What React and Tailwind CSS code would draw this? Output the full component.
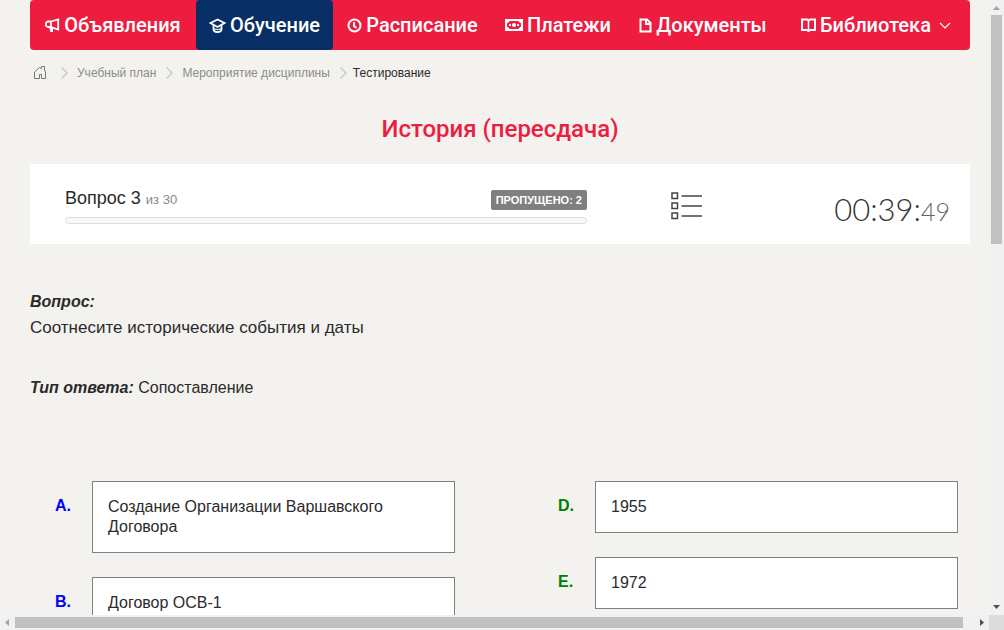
import React from "react";

function MegaphoneIcon() {
  return (
    <svg width="15" height="15" viewBox="0 0 15 15" fill="none" stroke="currentColor" strokeWidth="1.800">
      <path d="M6 3.500 13.200 1.500v10L6 9z" />
      <path d="M6 3.500H3a2 2 0 0 0-2 2A2.500 2.500 0 0 0 3.500 9H6" />
      <path d="M4 9h4v5H5.500z" fill="currentColor" stroke="none" />
    </svg>
  );
}

function GraduationIcon() {
  return (
    <svg width="17" height="15" viewBox="0 0 17 15" fill="none" stroke="currentColor" strokeWidth="1.800">
      <path d="M1.500 5 8.500 1.500 15.500 5 8.500 9z" />
      <path d="M4.500 7v4c0 1.500 1.500 3 4 3s4-1.500 4-3V7" />
      <path d="M4.500 10.500c1.500 1 2.500 1 4 1s2.500 0 4-1" strokeWidth="1.200" />
    </svg>
  );
}

function ClockIcon() {
  return (
    <svg width="15" height="15" viewBox="0 0 15 15" fill="none" stroke="currentColor" strokeWidth="2">
      <circle cx="7.500" cy="7.500" r="6" />
      <path d="M7 4v4l2.500 2" />
    </svg>
  );
}

function MoneyIcon() {
  return (
    <svg width="18" height="12" viewBox="0 0 18 12" fill="currentColor">
      <path fillRule="evenodd" d="M0 0h18v12H0zM5 2 2 4.500v3L5 10h8l3-2.500v-3L13 2z" />
      <circle cx="9" cy="6" r="2" />
      <path d="M4 5h2v2H4zM12 5h2v2h-2z" />
    </svg>
  );
}

function DocumentIcon() {
  return (
    <svg width="13" height="15" viewBox="0 0 13 15" fill="none" stroke="currentColor" strokeWidth="2">
      <path d="M1.500 1.500H8L11.500 5v8.500h-10z" />
      <path d="M7 1.500V6h4.500" />
    </svg>
  );
}

function BookIcon() {
  return (
    <svg width="15" height="15" viewBox="0 0 15 15" fill="none" stroke="currentColor" strokeWidth="2">
      <path d="M1 1.500h5L7.500 2.500 9 1.500h5v10.500H9L7.500 13 6 12H1z" />
      <path d="M7.500 2v12" strokeWidth="1.500" />
    </svg>
  );
}

function HomeIcon() {
  return (
    <svg width="14" height="14" viewBox="0 0 14 14" fill="none" stroke="#777777" strokeWidth="1">
      <path d="M1.500 12.500V6L6.500 1.500l2 1V.5h3V4l1 2v6.500h-4v-4h-2v4z" />
    </svg>
  );
}

function CrumbArrow() {
  return (
    <svg className="shrink-0" width="7" height="12" viewBox="0 0 7 12" fill="none" stroke="#c8c8c6" strokeWidth="1.400">
      <path d="M.5.5 6 6 .5 11.500" />
    </svg>
  );
}

function ListIcon() {
  return (
    <svg width="32" height="28" viewBox="0 0 32 28" fill="none" stroke="#444444" strokeWidth="1.500">
      <path d="M1 1h5.500v5.500H1zM1 11h5.500v5.500H1zM1 21h5.500v5.500H1z" />
      <path d="M10.500 4H31M10.500 14H31M10.500 24H31" />
    </svg>
  );
}

const menu = [
  { title: "Объявления", icon: <MegaphoneIcon /> },
  { title: "Обучение", icon: <GraduationIcon />, active: true },
  { title: "Расписание", icon: <ClockIcon /> },
  { title: "Платежи", icon: <MoneyIcon /> },
  { title: "Документы", icon: <DocumentIcon /> },
  { title: "Библиотека", icon: <BookIcon />, dropdown: true },
];

const events = [
  { letter: "A.", text: "Создание Организации Варшавского Договора" },
  { letter: "B.", text: "Договор ОСВ-1" },
];

const dates = [
  { letter: "D.", text: "1955" },
  { letter: "E.", text: "1972" },
];

function Menu() {
  return (
    <nav className="grid h-[50px] grid-cols-[166fr_137fr_159fr_132fr_158fr_188fr] overflow-hidden rounded bg-[#ee1c3f] font-['Roboto',sans-serif] text-xl font-medium text-white">
      {menu.map((item) => (
        <a
          key={item.title}
          href="#"
          className={
            item.active
              ? "flex items-center justify-center gap-1 rounded bg-[#082f65]"
              : "flex items-center justify-center gap-1"
          }
        >
          {item.icon}
          <span>{item.title}</span>
          {item.dropdown && (
            <svg className="ml-1" width="12" height="7" viewBox="0 0 12 7" fill="none" stroke="currentColor" strokeWidth="1.200">
              <path d="M1 1l5 5 5-5" />
            </svg>
          )}
        </a>
      ))}
    </nav>
  );
}

function Breadcrumbs() {
  return (
    <div className="flex items-center pt-3.5 pl-[3px] text-xs leading-[18px] text-[#8c8c8c]">
      <a href="#" aria-label="Главная" className="mr-3.5">
        <HomeIcon />
      </a>
      <CrumbArrow />
      <a href="#" className="mr-2.5 ml-[9px]">Учебный план</a>
      <CrumbArrow />
      <a href="#" className="mr-2.5 ml-[9px]">Мероприятие дисциплины</a>
      <CrumbArrow />
      <span className="ml-1.5 text-[#2b2b2b]">Тестирование</span>
    </div>
  );
}

function StatusPanel() {
  return (
    <div className="flex h-20 items-center bg-white pt-1 pr-5 pl-[35px]">
      <div className="w-[522px]">
        <div className="flex items-end justify-between">
          <div className="text-lg leading-5 text-[#2b2b2b]">
            Вопрос 3 <span className="text-[13px] text-[#888888]">из 30</span>
          </div>
          <span className="rounded-xs bg-[#808080] px-[5px] text-[11px] leading-5 font-bold text-white">
            ПРОПУЩЕНО: 2
          </span>
        </div>
        <div className="mt-[7px] h-[7px] rounded-full border border-[#dcdcdc] bg-[#f8f8f8]" />
      </div>
      <button type="button" aria-label="Список вопросов" className="ml-[84px]">
        <ListIcon />
      </button>
      <div className="ml-auto pt-2 font-['Lato',sans-serif] text-[31px] leading-10 font-light text-[#333333]">
        00:39:<span className="text-[25px] text-[#666666]">49</span>
      </div>
    </div>
  );
}

function Options({ items, color }) {
  return (
    <ul className="space-y-6">
      {items.map((item) => (
        <li key={item.letter} className="flex">
          <span className={color}>{item.letter}</span>
          <div className="flex-1 border border-[#808080] bg-white px-[15px] py-[15px]">{item.text}</div>
        </li>
      ))}
    </ul>
  );
}

function VerticalScroll() {
  return (
    <div className="flex flex-col items-center bg-[#f1f1f1]">
      <svg width="15" height="15" viewBox="0 0 15 15" fill="#a3a3a3">
        <path d="M4 10h7L7.500 6z" />
      </svg>
      <div className="h-[229px] w-[11px] bg-[#c1c1c1]" />
      <svg className="mt-auto" width="15" height="15" viewBox="0 0 15 15" fill="#505050">
        <path d="M4 5h7L7.500 9z" />
      </svg>
    </div>
  );
}

function HorizontalScroll() {
  return (
    <div className="flex items-center bg-[#f1f1f1]">
      <svg width="15" height="15" viewBox="0 0 15 15" fill="#a3a3a3">
        <path d="M9 4v7L5 7.500z" />
      </svg>
      <div className="mr-[11px] h-[11px] flex-1 bg-[#c1c1c1]" />
      <svg width="15" height="15" viewBox="0 0 15 15" fill="#505050">
        <path d="M6 4v7l4-3.500z" />
      </svg>
    </div>
  );
}

function App() {
  return (
    <div className="grid h-screen grid-cols-[minmax(0,1fr)_15px] grid-rows-[minmax(0,1fr)_15px] overflow-hidden bg-[#f3f2ee] font-['Liberation_Sans',sans-serif] text-base leading-5 text-[#2b2b2b]">
      <main className="overflow-hidden pr-[19px] pl-[30px]">
        <Menu />
        <Breadcrumbs />
        <h1 className="mt-8 mb-5 text-center font-['Roboto',sans-serif] text-2xl leading-[30px] font-medium text-[#ee1c3f]">
          История (пересдача)
        </h1>
        <StatusPanel />
        <section className="pt-12">
          <p className="font-bold italic">Вопрос:</p>
          <p className="mt-1.5 text-[17px]">Соотнесите исторические события и даты</p>
          <p className="mt-10">
            <b className="italic">Тип ответа:</b> Сопоставление
          </p>
        </section>
        <section className="mt-[83px] grid grid-cols-2 gap-x-[103px] pr-3 pl-[25px]">
          <Options items={events} color="w-[37px] pt-[15px] font-bold text-[#0000ff]" />
          <Options items={dates} color="w-[37px] pt-[15px] font-bold text-[#008000]" />
        </section>
      </main>
      <VerticalScroll />
      <HorizontalScroll />
      <div className="bg-[#dcdcdc]" />
    </div>
  );
}

export default App;
